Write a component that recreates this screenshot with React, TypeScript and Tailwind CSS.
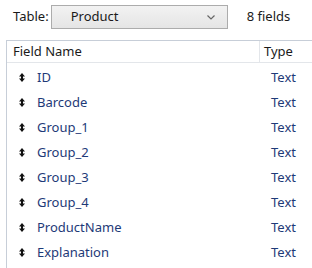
import React from "react";

const fields = [
  "ID",
  "Barcode",
  "Group_1",
  "Group_2",
  "Group_3",
  "Group_4",
  "ProductName",
  "Explanation",
];

function SortIcon() {
  return (
    <svg width="6" height="9" viewBox="0 0 6 9" className="shrink-0">
      <path d="M3 0 L6 3.5 L0 3.5 Z" fill="#111" />
      <rect x="2" y="3" width="2" height="3" fill="#111" />
      <path d="M0 5.5 L6 5.5 L3 9 Z" fill="#111" />
    </svg>
  );
}

export default function App() {
  return (
    <div
      className="w-[312px] h-[268px] bg-white overflow-hidden text-[13px] text-[#1a1a1a]"
      style={{ fontFamily: '"Noto Sans", "Open Sans", sans-serif' }}
    >
      <div className="flex items-center h-[34px] pl-[13px]">
        <span>Table:</span>
        <div className="ml-[2px] w-[177px] h-[24px] border border-[#acacac] bg-gradient-to-b from-[#f2f2f2] to-[#e5e5e5] flex items-center justify-between pl-[19px] pr-[12px]">
          <span>Product</span>
          <svg width="8" height="5" viewBox="0 0 8 5">
            <path d="M0.5 0.5 L4 4 L7.5 0.5" stroke="#666" strokeWidth="1.2" fill="none" />
          </svg>
        </div>
        <span className="ml-[19px]">8 fields</span>
      </div>
      <div className="ml-[6px] mt-[6px] w-[320px] h-[240px] border border-[#c7ced8] border-r-0">
        <div className="flex h-[22px] border-b border-[#e3e6ea] items-center">
          <div className="w-[253px] pl-[6px] border-r border-[#e3e6ea] h-full flex items-center">
            Field Name
          </div>
          <div className="pl-[4px]">Type</div>
        </div>
        <div className="pt-[2px]">
          {fields.map((f) => (
            <div key={f} className="flex items-center h-[25px] text-[#1e3a78]">
              <div className="w-[253px] flex items-center pl-[12px] gap-[12px]">
                <SortIcon />
                <span>{f}</span>
              </div>
              <div className="pl-[11px]">Text</div>
            </div>
          ))}
        </div>
      </div>
    </div>
  );
}
